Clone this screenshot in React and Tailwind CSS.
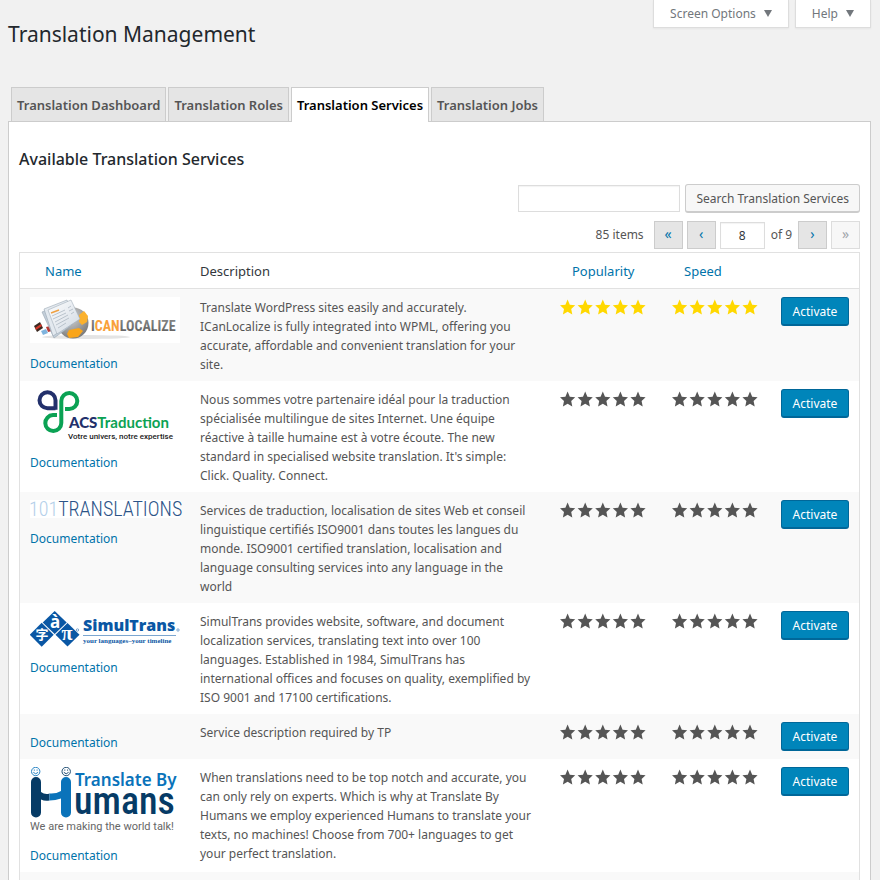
import { useState } from "react";

const tabs = [
  "Translation Dashboard",
  "Translation Roles",
  "Translation Services",
  "Translation Jobs",
];

const services = [
  {
    id: "icanlocalize",
    logo: ICanLocalizeLogo,
    description:
      "Translate WordPress sites easily and accurately. ICanLocalize is fully integrated into WPML, offering you accurate, affordable and convenient translation for your site.",
    featured: true,
  },
  {
    id: "acs",
    logo: AcsLogo,
    description:
      "Nous sommes votre partenaire idéal pour la traduction spécialisée multilingue de sites Internet. Une équipe réactive à taille humaine est à votre écoute. The new standard in specialised website translation. It's simple: Click. Quality. Connect.",
  },
  {
    id: "101translations",
    logo: OneOhOneLogo,
    description:
      "Services de traduction, localisation de sites Web et conseil linguistique certifiés ISO9001 dans toutes les langues du monde. ISO9001 certified translation, localisation and language consulting services into any language in the world",
  },
  {
    id: "simultrans",
    logo: SimulTransLogo,
    description:
      "SimulTrans provides website, software, and document localization services, translating text into over 100 languages. Established in 1984, SimulTrans has international offices and focuses on quality, exemplified by ISO 9001 and 17100 certifications.",
  },
  {
    id: "tp",
    description: "Service description required by TP",
  },
  {
    id: "translatebyhumans",
    logo: HumansLogo,
    description:
      "When translations need to be top notch and accurate, you can only rely on experts. Which is why at Translate By Humans we employ experienced Humans to translate your texts, no machines! Choose from 700+ languages to get your perfect translation.",
  },
];

function ICanLocalizeLogo() {
  return (
    <svg width="150" height="46" viewBox="0 0 150 46" className="block" role="img" aria-label="ICanLocalize">
      <defs>
        <radialGradient id="globe" cx="0.4" cy="0.3" r="0.8">
          <stop offset="0" stopColor="#d8d8d8" />
          <stop offset="1" stopColor="#6f6f6f" />
        </radialGradient>
        <linearGradient id="letters" x1="0" y1="0" x2="0" y2="1">
          <stop offset="0" stopColor="#8a8a8a" />
          <stop offset="1" stopColor="#5c5c5c" />
        </linearGradient>
        <linearGradient id="paper" x1="0" y1="0" x2="1" y2="1">
          <stop offset="0" stopColor="#ffffff" />
          <stop offset="1" stopColor="#cfd8e2" />
        </linearGradient>
      </defs>
      <rect width="150" height="46" fill="#fff" />
      <ellipse cx="56" cy="40" rx="44" ry="2" fill="#e4e4e4" />
      <circle cx="43" cy="26" r="15.5" fill="url(#globe)" />
      <path d="M49 18l5-4 4 5-1 6-5 3-3-3z" fill="#fbb12d" />
      <path d="M39 33l10-2 4 3-5 6-9 1-2-4z" fill="#f9a51a" />
      <path d="M4 29l6-4 3 6-6 4z" fill="#3a2a22" />
      <path d="M5 31l6-4 1 2-6 4z" fill="#d33a2c" />
      <path d="M11 34l5-2 2 4-5 2z" fill="#7fb4de" />
      <path d="M16 30l4-1 2 5-4 1z" fill="#b83a35" />
      <path d="M12 15l20-9 10 22-18 13z" fill="#c3ced9" stroke="#9aa7b4" strokeWidth="0.6" />
      <path d="M14 12l23-9 8 21-22 15z" fill="#e3e9ef" stroke="#9aa7b4" strokeWidth="0.6" />
      <path d="M18 13l23-10 9 19-23 15z" fill="url(#paper)" stroke="#a3afbb" strokeWidth="0.6" />
      <path d="M21 16l8-3" stroke="#f0a040" strokeWidth="1.4" />
      <path d="M22 19l13-6M23 22l13-6M25 25l13-7M26 28l13-7M28 31l8-5M38 11l3-2M39 14l4-2M41 17l3-2" stroke="#b3bdc7" strokeWidth="0.9" />
      <text x="61" y="34" fontFamily="Roboto Condensed, Roboto, sans-serif" fontSize="14" fontWeight="700" fill="url(#letters)">
        I<tspan fill="#f9a13a">CAN</tspan>LOCALIZE
      </text>
    </svg>
  );
}

function AcsLogo() {
  return (
    <svg width="150" height="53" viewBox="0 0 150 53" className="block" role="img" aria-label="ACS Traduction">
      <g fill="none" strokeWidth="4">
        <path d="M25.500 20.800V11.300a8 8 0 1 0-8 8h8" stroke="#22306b" />
        <path d="M27 26h-4a8 8 0 1 0 8.300 8V12a8 8 0 1 1 8 8h-4.300" stroke="#0ba254" />
      </g>
      <text x="39" y="39" fontFamily="Lato, sans-serif" fontSize="15" fontWeight="900" fill="#22306b">
        ACS<tspan fontWeight="700" fill="#0ba254">Traduction</tspan>
      </text>
      <text x="38" y="50" fontFamily="Roboto, sans-serif" fontSize="8" fontWeight="500" fill="#222">
        Votre univers, notre expertise
      </text>
    </svg>
  );
}

function OneOhOneLogo() {
  return (
    <svg width="156" height="18" viewBox="0 0 156 18" className="block -mr-2" role="img" aria-label="101translations">
      <rect width="150" height="18" fill="#fff" />
      <text x="-1" y="16" fontFamily="Roboto Condensed, Roboto, sans-serif" fontSize="20" fontWeight="300" fill="#2c5488">
        <tspan fill="#b4d0ea">101</tspan>TRANSLATIONS
      </text>
    </svg>
  );
}

function SimulTransLogo() {
  return (
    <svg width="150" height="36" viewBox="0 0 150 36" className="block" role="img" aria-label="SimulTrans">
      <g fill="#0a57a4">
        <path d="M11.700 11.700l12 12-12 12-12-12z" />
        <path d="M24.700 0l12 11.500-12 11.500-12-11.500z" />
        <path d="M37.500 12l12 11.700-12 11.700-12-11.700z" />
      </g>
      <g fill="#fff" fontWeight="700" textAnchor="middle">
        <text x="12" y="28" fontFamily="Noto Sans CJK TC, sans-serif" fontSize="13">字</text>
        <text x="25" y="17" fontFamily="Noto Sans, sans-serif" fontSize="17">à</text>
        <text x="37" y="29" fontFamily="Liberation Serif, serif" fontSize="20">π</text>
      </g>
      <text x="53" y="20" fontFamily="Open Sans, sans-serif" fontSize="16" fontWeight="800" fill="#0a57a4">SimulTrans</text>
      <path d="M53 24.500h93" stroke="#5b8fc4" strokeWidth="0.8" />
      <text x="53" y="32" fontFamily="Liberation Serif, serif" fontSize="7" fontWeight="700" fill="#0a57a4">
        your languages–your timeline
      </text>
      <circle cx="148" cy="19" r="1.200" fill="none" stroke="#0a57a4" strokeWidth="0.5" />
      <circle cx="47.500" cy="19" r="1.200" fill="none" stroke="#0a57a4" strokeWidth="0.5" />
    </svg>
  );
}

function HumansLogo() {
  return (
    <svg width="152" height="68" viewBox="0 0 152 68" className="block" role="img" aria-label="Translate By Humans">
      <g fill="none" strokeWidth="0.9">
        <g stroke="#1377bd">
          <circle cx="5.700" cy="4.500" r="4.200" />
          <path d="M3.300 5.300q2.400 3 4.800 0M4.300 2.500v1.200M7.100 2.500v1.200" />
        </g>
        <g stroke="#083a63">
          <circle cx="36.200" cy="4.500" r="4.200" />
          <path d="M33.800 5.300q2.400 3 4.800 0M34.800 2.500v1.200M37.600 2.500v1.200" />
        </g>
      </g>
      <path d="M1 15a5 5 0 0 1 10 0v10q4 3 8.500 1.500v7q-4.500 1-8.500-1v13a5 5 0 0 1-10 0z" fill="#063b66" />
      <path d="M41 15a5 5 0 0 0-10 0v9q-5 3-11.500 2.500v7q6 0 11.500-2v14a5 5 0 0 0 10 0z" fill="#0a73ba" />
      <text x="45" y="19" fontFamily="Noto Sans, sans-serif" fontSize="17" fontWeight="600" fill="#0a73ba">Translate By</text>
      <text x="44" y="47" fontFamily="Roboto Condensed, Roboto, sans-serif" fontSize="38" fontWeight="500" fill="#063b66">umans</text>
      <text x="0" y="63" fontFamily="Roboto, sans-serif" fontSize="11" fill="#666">We are making the world talk!</text>
    </svg>
  );
}

function Stars({ featured, label }) {
  return (
    <svg
      width="86"
      height="19"
      viewBox="0 0 86 19"
      role="img"
      aria-label={label}
      className={featured ? "block fill-[#ffd800]" : "block fill-[#555]"}
    >
      {[0, 17.6, 35.2, 52.8, 70.4].map((x) => (
        <path
          key={x}
          transform={`translate(${x} 2.500)`}
          d="M7.600 0l2.200 5.200 5.400.6-4 3.800 1.100 5.400-4.700-2.700L2.900 15 4 9.600 0 5.800l5.400-.6z"
        />
      ))}
    </svg>
  );
}

function MetaButton({ children }) {
  return (
    <button
      type="button"
      className="h-7 flex items-center gap-2 px-4 bg-white border border-t-0 border-[#ddd] text-[#72777c] shadow-xs"
    >
      {children}
      <svg width="8" height="7" viewBox="0 0 8 7" className="fill-[#72777c]">
        <path d="M0 0h8L4 7z" />
      </svg>
    </button>
  );
}

function PageButton({ children, label, disabled }) {
  return (
    <button
      type="button"
      aria-label={label}
      disabled={disabled}
      className="w-[29px] h-7 pb-[2px] border border-[#ccc] bg-[#e5e5e5] text-[#0073aa] text-sm leading-none disabled:border-[#ddd] disabled:bg-[#f7f7f7] disabled:text-[#a0a5aa]"
    >
      {children}
    </button>
  );
}

export default function App() {
  const [activeTab, setActiveTab] = useState("Translation Services");
  const [search, setSearch] = useState("");
  const [page, setPage] = useState("8");

  return (
    <div className="h-screen overflow-hidden bg-[#f1f1f1] pl-2 pr-[9px] text-xs text-[#555] font-['Noto_Sans','Open_Sans',sans-serif]">
      {/* HEADER */}
      <header className="flex justify-between items-start h-[87px]">
        <h1 className="pt-5 text-[21px] leading-7 text-[#23282d]">Translation Management</h1>
        <div className="flex gap-[6px]">
          <MetaButton>Screen Options</MetaButton>
          <MetaButton>Help</MetaButton>
        </div>
      </header>

      {/* TABS */}
      <nav className="relative flex gap-[2px] pl-[3px] -mb-px">
        {tabs.map((tab) => (
          <button
            key={tab}
            type="button"
            onClick={() => setActiveTab(tab)}
            className={
              tab === activeTab
                ? "h-[35px] px-[5px] pt-px border border-b-0 border-[#ccc] bg-white text-black text-[13px] font-semibold"
                : "h-[35px] px-[5px] pt-[2px] border border-[#ccc] bg-[#e5e5e5] text-[#555] text-[13px] font-semibold"
            }
          >
            {tab}
          </button>
        ))}
      </nav>

      <main className="bg-white border border-[#ccc] px-[10px] pt-[25px] min-h-screen">
        <h2 className="text-base leading-6 font-medium text-[#23282d]">Available Translation Services</h2>

        {/* SEARCH */}
        <form className="flex justify-end items-center gap-[5px] mt-[13px]" onSubmit={(e) => e.preventDefault()}>
          <input
            type="search"
            aria-label="Search Translation Services"
            value={search}
            onChange={(e) => setSearch(e.target.value)}
            className="w-[162px] h-[27px] px-1 border border-[#ddd] bg-white inset-shadow-xs"
          />
          <button
            type="submit"
            className="h-[29px] px-[10px] pt-[2px] border border-b-2 border-[#ccc] rounded-[3px] bg-[#f7f7f7]"
          >
            Search Translation Services
          </button>
        </form>

        {/* PAGINATION */}
        <div className="flex justify-end items-center gap-1 mt-2 mb-[3px]">
          <span className="mr-[6px]">85 items</span>
          <PageButton label="First page">«</PageButton>
          <PageButton label="Previous page">‹</PageButton>
          <input
            type="text"
            aria-label="Current page"
            value={page}
            onChange={(e) => setPage(e.target.value)}
            className="w-[45px] h-[27px] border border-[#ddd] bg-white text-center text-[#32373c] inset-shadow-xs"
          />
          <span className="mx-[2px]">of 9</span>
          <PageButton label="Next page">›</PageButton>
          <PageButton label="Last page" disabled>»</PageButton>
        </div>

        {/* SERVICES */}
        <table className="w-full table-fixed border-separate border-spacing-0 border border-b-0 border-[#e1e1e1]">
          <colgroup>
            <col className="w-[170px]" />
            <col />
            <col className="w-28" />
            <col className="w-[109px]" />
            <col className="w-[88px]" />
          </colgroup>
          <thead>
            <tr className="h-9 text-left text-[13px] text-[#0073aa] *:border-b *:border-[#e1e1e1] *:pt-[2px] *:font-normal">
              <th className="pl-[25px]"><a href="#name">Name</a></th>
              <th className="pl-[10px] text-[#32373c]">Description</th>
              <th className="pl-[22px]"><a href="#popularity">Popularity</a></th>
              <th className="pl-[22px]"><a href="#speed">Speed</a></th>
              <th aria-label="Action" />
            </tr>
          </thead>
          <tbody>
            {services.map(({ id, logo: Logo, description, featured }) => (
              <tr key={id} className="align-top odd:bg-[#f9f9f9]">
                <td className="px-[10px] pt-2 pb-[7px]">
                  {Logo && <Logo />}
                  <a href={`#${id}`} className="block mt-3 leading-[18px] text-[#0073aa]">
                    Documentation
                  </a>
                </td>
                <td className="pl-[10px] pr-4 pt-[9px] pb-[7px] leading-[19px]">{description}</td>
                <td className="px-[10px] pt-2"><Stars featured={featured} label="Popularity" /></td>
                <td className="px-[10px] pt-2"><Stars featured={featured} label="Speed" /></td>
                <td className="px-[10px] pt-2">
                  <button
                    type="button"
                    className="w-full h-[29px] pt-[2px] border border-b-2 border-[#006799] rounded-[3px] bg-[#0085ba] text-white"
                  >
                    Activate
                  </button>
                </td>
              </tr>
            ))}
            <tr className="h-4 bg-[#f9f9f9]">
              <td colSpan={5} />
            </tr>
          </tbody>
        </table>
      </main>
    </div>
  );
}
